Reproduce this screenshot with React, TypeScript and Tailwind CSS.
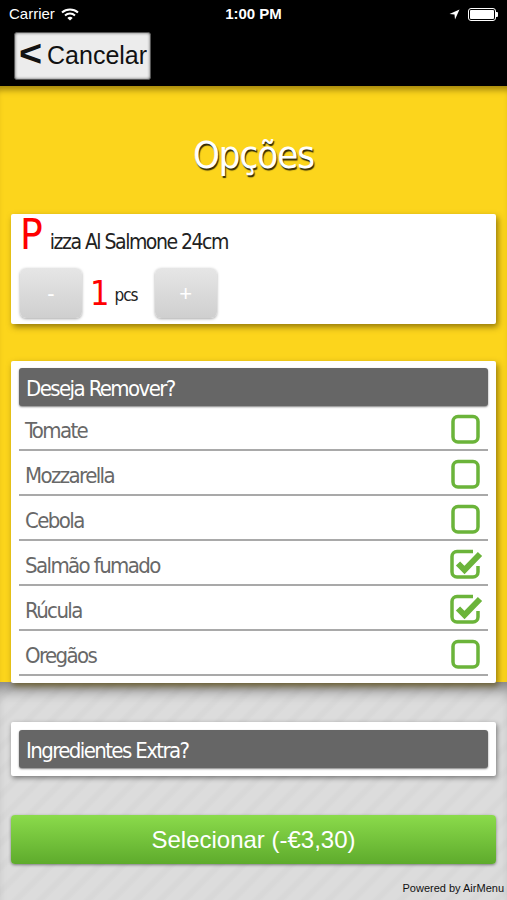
import React from "react";

const cond = { fontFamily: '"Liberation Sans Narrow", "DejaVu Sans Condensed", "Roboto Condensed", "Liberation Sans", sans-serif' };
const sans = { fontFamily: '"Liberation Sans", Arial, sans-serif' };

function Box({ checked }: { checked: boolean }) {
  return (
    <svg width="34" height="34" viewBox="0 0 34 34" className="shrink-0">
      {checked ? (
        <>
          <path d="M24 5.5 H8 a5 5 0 0 0 -5 5 V26 a5 5 0 0 0 5 5 H24 a5 5 0 0 0 5 -5 V20" fill="none" stroke="#6bb43a" strokeWidth="3.5" />
          <path d="M9 17.5 L15.5 24 L31 8" fill="none" stroke="#6bb43a" strokeWidth="6" strokeLinejoin="miter" />
        </>
      ) : (
        <rect x="4" y="5.5" width="25" height="25.5" rx="5" fill="none" stroke="#6bb43a" strokeWidth="3.5" />
      )}
    </svg>
  );
}

function Row({ label, checked }: { label: string; checked: boolean }) {
  return (
    <div className="mx-[8px] h-[45px] flex items-center justify-between border-b-2 border-[#a9a9a9]">
      <span className="pl-[6px] pt-[5px] text-[22px] tracking-[-1.6px] text-[#686868]" style={cond}>{label}</span>
      <span className="pr-[5px]"><Box checked={checked} /></span>
    </div>
  );
}

function Header({ text }: { text: string }) {
  return (
    <div className="mx-[8px] h-[38px] rounded-[3px] bg-[#666666] flex items-center pl-[7px] pt-[2px] text-white text-[22px] tracking-[-1.6px] shadow-[0_1px_2px_rgba(0,0,0,0.5)]" style={cond}>
      {text}
    </div>
  );
}

function QtyBtn({ label }: { label: string }) {
  return (
    <div className="w-[62px] h-[50px] rounded-[6px] bg-gradient-to-b from-[#e6e6e6] to-[#cfcfcf] shadow-[0_1px_3px_rgba(0,0,0,0.35)] flex items-center justify-center text-white text-[22px]" style={sans}>
      {label}
    </div>
  );
}

export default function App() {
  const items: [string, boolean][] = [
    ["Tomate", false],
    ["Mozzarella", false],
    ["Cebola", false],
    ["Salmão fumado", true],
    ["Rúcula", true],
    ["Oregãos", false],
  ];
  return (
    <div className="w-[507px] h-[900px] flex flex-col bg-black overflow-hidden">
      {/* status bar */}
      <div className="h-[28px] flex items-center justify-between px-[9px] text-white text-[15px]" style={sans}>
        <div className="flex items-center gap-[6px] w-[120px]">
          <span>Carrier</span>
          <svg width="18" height="13" viewBox="0 0 18 13">
            <path d="M1 4.5 A12 12 0 0 1 17 4.5" fill="none" stroke="white" strokeWidth="2" />
            <path d="M4 7.5 A7.5 7.5 0 0 1 14 7.5" fill="none" stroke="white" strokeWidth="2" />
            <path d="M9 12.5 L6.3 10 A4 4 0 0 1 11.7 10 Z" fill="white" />
          </svg>
        </div>
        <span className="font-semibold">1:00 PM</span>
        <div className="flex items-center justify-end gap-[8px] w-[120px]">
          <svg width="11" height="11" viewBox="0 0 11 11"><path d="M10.5 0.5 L0.5 5 L5.5 5.5 L6 10.5 Z" fill="white" /></svg>
          <div className="flex items-center">
            <div className="w-[28px] h-[13px] rounded-[3px] border border-white p-[1px]"><div className="w-full h-full bg-white rounded-[1px]" /></div>
            <div className="w-[2px] h-[5px] bg-white rounded-r-[1px]" />
          </div>
        </div>
      </div>
      {/* nav */}
      <div className="h-[58px] pt-[4px] px-[14px]">
        <div className="w-[137px] h-[48px] rounded-[3px] bg-[#ececec] border border-[#555] shadow-[inset_0_0_3px_rgba(0,0,0,0.6)] flex items-center pl-[5px] gap-[6px]" style={sans}>
          <span className="text-[36px] font-bold leading-none text-[#111] -mt-[5px] scale-x-[1.1]">&lt;</span>
          <span className="text-[25px] text-[#111]">Cancelar</span>
        </div>
      </div>
      {/* yellow */}
      <div className="bg-[#fcd51c] relative px-[11px] flex flex-col shadow-[inset_0_8px_6px_-4px_rgba(90,70,0,0.55)]">
        <div className="h-[128px] flex items-center justify-center pt-[10px]">
          <span className="text-white text-[38px] tracking-[-1px] [text-shadow:1px_2px_1px_rgba(0,0,0,0.8)]" style={cond}>Opções</span>
        </div>
        <div className="bg-white h-[110px] rounded-[2px] shadow-[2px_3px_6px_rgba(90,70,0,0.65)] px-[9px] pt-[2px]">
          <div className="flex items-end h-[40px]" style={cond}>
            <span className="text-[#ff0000] text-[42px] leading-none">P</span>
            <span className="text-[#222] text-[21px] tracking-[-1.5px] ml-[7px] leading-none mb-[3px]">izza Al Salmone 24cm</span>
          </div>
          <div className="flex items-center mt-[12px]">
            <QtyBtn label="-" />
            <span className="text-[#ff0000] text-[34px] ml-[8px] leading-none" style={cond}>1</span>
            <span className="text-[#222] text-[17px] tracking-[-1px] ml-[5px] mt-[6px]" style={cond}>pcs</span>
            <span className="ml-[17px]"><QtyBtn label="+" /></span>
          </div>
        </div>
        <div className="bg-white mt-[36px] rounded-[2px] shadow-[2px_3px_6px_rgba(90,70,0,0.65)] pt-[7px] pb-[7px] relative z-10 translate-y-[1px]">
          <Header text="Deseja Remover?" />
          {items.map(([l, c]) => (
            <Row key={l} label={l} checked={c} />
          ))}
        </div>
      </div>
      {/* gray */}
      <div className="flex-1 px-[11px] pt-[40px] flex flex-col bg-[repeating-linear-gradient(135deg,#dcdcdc_0px,#dcdcdc_8px,#d8d8d8_11px,#d8d8d8_14px,#dcdcdc_17px)] shadow-[inset_0_16px_14px_-8px_rgba(0,0,0,0.4)]">
        <div className="bg-white rounded-[2px] shadow-[1px_2px_5px_rgba(0,0,0,0.45)] py-[8px]">
          <Header text="Ingredientes Extra?" />
        </div>
        <div className="mt-[39px] h-[49px] rounded-[4px] bg-gradient-to-b from-[#8bdb4b] to-[#5eab2c] shadow-[0_1px_3px_rgba(0,0,0,0.45)] flex items-center justify-center text-white text-[24px]" style={sans}>
          Selecionar (-€3,30)
        </div>
        <div className="mt-[16px] text-right text-[11px] text-[#111] -mr-[8px]" style={sans}>Powered by AirMenu</div>
      </div>
    </div>
  );
}
